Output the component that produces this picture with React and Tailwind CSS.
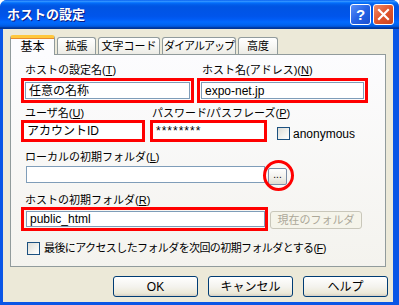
import React from 'react';

const FONT = { fontFamily: '"Liberation Sans", "Noto Sans CJK JP", sans-serif' };

const TABS = [
  { label: '基本', w: 'w-[45px]' },
  { label: '拡張', w: 'w-[39px]' },
  { label: '文字コード', w: 'w-[62px]' },
  { label: 'ダイアルアップ', w: 'w-[74px]' },
  { label: '高度', w: 'w-[40px]' },
];

const Checkbox = () => (
  <div className="w-[13px] h-[13px] border border-[#1c5180] bg-[linear-gradient(135deg,#dcdcd7_0%,#f3f3ef_60%,#ffffff_100%)] shrink-0" />
);

const XpButton = ({ children, className = '' }) => (
  <div
    className={`h-[21px] rounded-[3px] border border-[#003c74] bg-[linear-gradient(to_bottom,#ffffff_0%,#f4f3ee_50%,#ece9d8_85%,#d6d0c5_100%)] flex items-center justify-center text-[12px] text-black whitespace-nowrap ${className}`}
  >
    {children}
  </div>
);

const Field = ({ children, className = '' }) => (
  <div className={`bg-white border border-[#7f9db9] flex items-center pl-[3px] text-[12px] text-black leading-none whitespace-nowrap overflow-hidden ${className}`}>
    {children}
  </div>
);

const Label = ({ children, className = '' }) => (
  <div className={`h-[13px] leading-[13px] whitespace-nowrap ${className}`}>{children}</div>
);

export default function App() {
  return (
    <div style={FONT} className="w-[399px] h-[305px] flex flex-col bg-[#0a56e6] rounded-t-[7px] overflow-hidden">
      {/* Title bar */}
      <div className="h-[29px] shrink-0 flex items-center justify-between pl-[7px] pr-[5px] bg-[linear-gradient(to_bottom,#0058ee_0%,#3593ff_4%,#288eff_6%,#127dff_8%,#036ffc_10%,#0262ee_14%,#0057e5_20%,#0054e3_24%,#0055eb_56%,#005bf5_66%,#026afe_76%,#0062ef_86%,#0052d6_92%,#0040ab_94%,#003092_100%)]">
        <span className="text-white font-bold text-[13px] [text-shadow:1px_1px_0_#0a1883]">ホストの設定</span>
        <div className="flex gap-[2px]">
          <div className="w-[21px] h-[21px] rounded-[3px] border border-white bg-[linear-gradient(135deg,#5b8ff8_0%,#2663e6_50%,#1a4fd0_100%)] flex items-center justify-center text-white font-bold text-[15px] leading-none">
            ?
          </div>
          <div className="w-[21px] h-[21px] rounded-[3px] border border-white bg-[linear-gradient(135deg,#f08c6a_0%,#e0552d_50%,#c9431f_100%)] flex items-center justify-center">
            <svg width="13" height="13" viewBox="0 0 13 13">
              <path d="M2 2 L11 11 M11 2 L2 11" stroke="#fff" strokeWidth="2.2" strokeLinecap="square" />
            </svg>
          </div>
        </div>
      </div>

      {/* Body */}
      <div className="flex-1 ml-[3px] mr-[6px] mb-[3px] bg-[#ece9d8] pl-[7px] pt-[6px] flex flex-col">
        {/* Tabs */}
        <div className="flex items-end h-[19px] gap-[1px] text-[11px] whitespace-nowrap">
          {TABS.map((t, i) =>
            i === 0 ? (
              <div
                key={t.label}
                className={`${t.w} h-[20px] -mb-[1px] relative z-10 bg-[#fcfcfe] border-x border-[#919b9c] rounded-t-[3px] border-t-[3px] border-t-[#ffc83c] shadow-[inset_0_1px_0_#e68b2c] flex items-center justify-center text-[12px] text-black`}
              >
                {t.label}
              </div>
            ) : (
              <div
                key={t.label}
                className={`${t.w} h-[17px] ml-[1px] border-t border-x border-[#919b9c] rounded-t-[3px] bg-[linear-gradient(to_bottom,#ffffff_0%,#f7f7f4_50%,#ecebe5_100%)] flex items-center justify-center text-black ${t.label.length > 5 ? 'tracking-[-1px]' : ''}`}
              >
                {t.label}
              </div>
            )
          )}
        </div>

        {/* Panel */}
        <div className="w-[376px] h-[213px] border border-[#919b9c] bg-[linear-gradient(to_bottom,#fcfcfe_0%,#f4f3ee_100%)] pl-[10px] pt-[9px] text-[11px] text-black">
          {/* Row 1 */}
          <div className="flex">
            <div className="w-[176px]">
              <Label className="ml-[4px]">ホストの設定名(<span className="underline">T</span>)</Label>
              <div className="mt-[1px] w-[173px] h-[25px] border-[3px] border-[#ff0000] p-[1px]">
                <Field className="h-full">任意の名称</Field>
              </div>
            </div>
            <div>
              <Label className="ml-[5px]">ホスト名(アドレス)(<span className="underline">N</span>)</Label>
              <div className="mt-[1px] w-[171px] h-[25px] border-[3px] border-[#ff0000] p-[1px]">
                <Field className="h-full">expo-net.jp</Field>
              </div>
            </div>
          </div>

          {/* Row 2 */}
          <div className="flex mt-[4px]">
            <div className="w-[129px]">
              <Label className="ml-[4px]">ユーザ名(<span className="underline">U</span>)</Label>
              <div className="w-[124px] h-[22px] border-[3px] border-[#ff0000]">
                <Field className="h-full border-0">アカウントID</Field>
              </div>
            </div>
            <div className="w-[127px]">
              <Label className="ml-[2px]">パスワード/パスフレーズ(<span className="underline">P</span>)</Label>
              <div className="w-[117px] h-[22px] border-[3px] border-[#ff0000]">
                <Field className="h-full border-0 tracking-[1px]">********</Field>
              </div>
            </div>
            <div className="flex items-center gap-[3px] mt-[20px] h-[13px] text-[12px]">
              <Checkbox />
              <span className="leading-none">anonymous</span>
            </div>
          </div>

          {/* Row 3 */}
          <Label className="mt-[9px] ml-[4px]">ローカルの初期フォルダ(<span className="underline">L</span>)</Label>
          <div className="flex items-start mt-[2px]">
            <Field className="ml-[5px] w-[239px] h-[17px]" />
            <div className="relative ml-[3px] mt-[2px]">
              <div className="w-[19px] h-[17px] rounded-[2px] border border-[#7a8da6] bg-[linear-gradient(to_bottom,#ffffff_0%,#f1f0ea_60%,#dedbd0_100%)] flex items-center justify-center text-[10px] leading-none pb-[3px]">
                ...
              </div>
              <div className="absolute left-[-5px] top-[-8px] w-[31px] h-[31px] rounded-full border-[3px] border-[#ff0000]" />
            </div>
          </div>

          {/* Row 4 */}
          <Label className="mt-[9px] ml-[4px]">ホストの初期フォルダ(<span className="underline">R</span>)</Label>
          <div className="flex items-start">
            <div className="w-[247px] h-[24px] border-[3px] border-[#ff0000] pl-[2px] py-[1px]">
              <Field className="h-full w-[239px]">public_html</Field>
            </div>
            <div className="ml-[2px] mt-[4px] w-[92px] h-[18px] rounded-[3px] border border-[#c9c7ba] bg-[#f5f4ea] flex items-center justify-center text-[#aca899] whitespace-nowrap">
              現在のフォルダ
            </div>
          </div>

          {/* Checkbox row */}
          <div className="flex items-center gap-[4px] mt-[11px] ml-[6px] whitespace-nowrap">
            <Checkbox />
            <span className="leading-none tracking-[-0.6px]">最後にアクセスしたフォルダを次回の初期フォルダとする(<span className="underline">F</span>)</span>
          </div>
        </div>

        {/* Dialog buttons */}
        <div className="flex justify-end gap-[10px] mt-[9px] pr-[5px]">
          <XpButton className="w-[85px]">OK</XpButton>
          <XpButton className="w-[85px]">キャンセル</XpButton>
          <XpButton className="w-[85px]">ヘルプ</XpButton>
        </div>
      </div>
    </div>
  );
}
